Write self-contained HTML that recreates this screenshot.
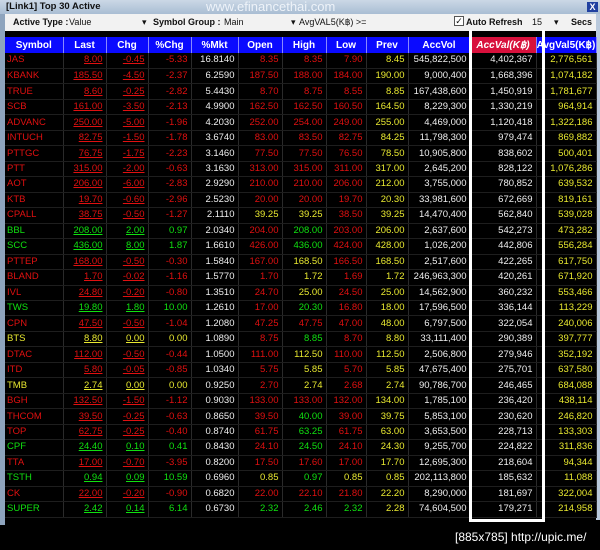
<!DOCTYPE html>
<html><head><meta charset="utf-8">
<style>
*{margin:0;padding:0;box-sizing:border-box}
body{width:600px;height:550px;background:#000;position:relative;overflow:hidden;font-family:"Liberation Sans",sans-serif}
.frameL{position:absolute;left:0;top:0;width:5px;height:525px;background:#8ea4bd}
.frameR{position:absolute;left:596px;top:0;width:4px;height:520px;background:#b9c9dc}
.title{position:absolute;left:0;top:0;width:600px;height:14px;background:linear-gradient(#cbd8e6,#a9bdd3);font-size:9.5px;font-weight:bold;color:#111;padding:1px 0 0 6px;white-space:nowrap}
.wm{position:absolute;left:206px;top:-1px;font-size:13px;color:#eef3f9;font-weight:normal}
.x{position:absolute;left:587px;top:2px;width:11px;height:10px;background:#2040a0;color:#fff;font-size:9px;text-align:center;line-height:10px}
.tb{position:absolute;left:5px;top:14px;width:591px;height:17px;background:#f2f2f2;font-size:9px;color:#111}
.tb span{position:absolute;top:3px;white-space:nowrap}
.blk{position:absolute;left:5px;top:31px;width:591px;height:6px;background:#000}
table{position:absolute;left:5px;top:37px;border-collapse:collapse;table-layout:fixed;font-size:9.5px}
th{background:#0a0aff;color:#fff;height:16px;font-weight:bold;border-right:1px solid #8888ff;font-size:10px;white-space:nowrap;overflow:hidden}
th.av{background:#d8103c;font-style:italic}
td{height:15.48px;border-right:1px solid #2a2a2a;border-bottom:1px solid #1e1e1e;text-align:right;padding-right:3px;white-space:nowrap;line-height:14px;overflow:hidden}
td:first-child{text-align:left;padding-left:2px}
.r{color:#e01010}.g{color:#10e010}.y{color:#e8e830}.w{color:#eee}
u{text-decoration:underline}
.box{position:absolute;left:469px;top:30px;width:76px;height:492px;border:3px solid #fff;border-top:none}
.cap{position:absolute;left:455px;top:530px;color:#fff;font-size:12px;font-family:"Liberation Sans",sans-serif;white-space:nowrap}
</style></head><body>
<div class="frameL"></div><div class="frameR"></div>
<div class="title">[Link1] Top 30 Active<span class="wm">www.efinancethai.com</span><div class="x">X</div></div>
<div class="tb">
<span style="left:8px;font-weight:bold">Active Type :</span><span style="left:64px">Value</span><span style="left:137px">▾</span>
<span style="left:148px;font-weight:bold">Symbol Group :</span><span style="left:219px">Main</span><span style="left:286px">▾</span>
<span style="left:294px">AvgVAL5(K฿) &gt;=</span>
<span style="left:449px;top:2px;width:10px;height:10px;border:1px solid #555;background:#fff;font-size:9px;line-height:8px;text-align:center">✓</span>
<span style="left:461px;font-weight:bold">Auto Refresh</span>
<span style="left:527px">15</span><span style="left:549px">▾</span><span style="left:566px;font-weight:bold">Secs</span>
</div>
<div class="blk"></div>
<table>
<colgroup><col style="width:58px"><col style="width:43px"><col style="width:42px"><col style="width:43px"><col style="width:47px"><col style="width:44px"><col style="width:44px"><col style="width:40px"><col style="width:42px"><col style="width:62px"><col style="width:66px"><col style="width:60px"></colgroup>
<tr><th>Symbol</th><th>Last</th><th>Chg</th><th>%Chg</th><th>%Mkt</th><th>Open</th><th>High</th><th>Low</th><th>Prev</th><th>AccVol</th><th class="av">AccVal(K฿)</th><th>AvgVal5(K฿)</th></tr>
<tr><td class="r">JAS</td><td class="r"><u>8.00</u></td><td class="r"><u>-0.45</u></td><td class="r">-5.33</td><td class="w">16.8140</td><td class="r">8.35</td><td class="r">8.35</td><td class="r">7.90</td><td class="y">8.45</td><td class="w">545,822,500</td><td class="w">4,402,367</td><td class="y">2,776,561</td></tr>
<tr><td class="r">KBANK</td><td class="r"><u>185.50</u></td><td class="r"><u>-4.50</u></td><td class="r">-2.37</td><td class="w">6.2590</td><td class="r">187.50</td><td class="r">188.00</td><td class="r">184.00</td><td class="y">190.00</td><td class="w">9,000,400</td><td class="w">1,668,396</td><td class="y">1,074,182</td></tr>
<tr><td class="r">TRUE</td><td class="r"><u>8.60</u></td><td class="r"><u>-0.25</u></td><td class="r">-2.82</td><td class="w">5.4430</td><td class="r">8.70</td><td class="r">8.75</td><td class="r">8.55</td><td class="y">8.85</td><td class="w">167,438,600</td><td class="w">1,450,919</td><td class="y">1,781,677</td></tr>
<tr><td class="r">SCB</td><td class="r"><u>161.00</u></td><td class="r"><u>-3.50</u></td><td class="r">-2.13</td><td class="w">4.9900</td><td class="r">162.50</td><td class="r">162.50</td><td class="r">160.50</td><td class="y">164.50</td><td class="w">8,229,300</td><td class="w">1,330,219</td><td class="y">964,914</td></tr>
<tr><td class="r">ADVANC</td><td class="r"><u>250.00</u></td><td class="r"><u>-5.00</u></td><td class="r">-1.96</td><td class="w">4.2030</td><td class="r">252.00</td><td class="r">254.00</td><td class="r">249.00</td><td class="y">255.00</td><td class="w">4,469,000</td><td class="w">1,120,418</td><td class="y">1,322,186</td></tr>
<tr><td class="r">INTUCH</td><td class="r"><u>82.75</u></td><td class="r"><u>-1.50</u></td><td class="r">-1.78</td><td class="w">3.6740</td><td class="r">83.00</td><td class="r">83.50</td><td class="r">82.75</td><td class="y">84.25</td><td class="w">11,798,300</td><td class="w">979,474</td><td class="y">869,882</td></tr>
<tr><td class="r">PTTGC</td><td class="r"><u>76.75</u></td><td class="r"><u>-1.75</u></td><td class="r">-2.23</td><td class="w">3.1460</td><td class="r">77.50</td><td class="r">77.50</td><td class="r">76.50</td><td class="y">78.50</td><td class="w">10,905,800</td><td class="w">838,602</td><td class="y">500,401</td></tr>
<tr><td class="r">PTT</td><td class="r"><u>315.00</u></td><td class="r"><u>-2.00</u></td><td class="r">-0.63</td><td class="w">3.1630</td><td class="r">313.00</td><td class="r">315.00</td><td class="r">311.00</td><td class="y">317.00</td><td class="w">2,645,200</td><td class="w">828,122</td><td class="y">1,076,286</td></tr>
<tr><td class="r">AOT</td><td class="r"><u>206.00</u></td><td class="r"><u>-6.00</u></td><td class="r">-2.83</td><td class="w">2.9290</td><td class="r">210.00</td><td class="r">210.00</td><td class="r">206.00</td><td class="y">212.00</td><td class="w">3,755,000</td><td class="w">780,852</td><td class="y">639,532</td></tr>
<tr><td class="r">KTB</td><td class="r"><u>19.70</u></td><td class="r"><u>-0.60</u></td><td class="r">-2.96</td><td class="w">2.5230</td><td class="r">20.00</td><td class="r">20.00</td><td class="r">19.70</td><td class="y">20.30</td><td class="w">33,981,600</td><td class="w">672,669</td><td class="y">819,161</td></tr>
<tr><td class="r">CPALL</td><td class="r"><u>38.75</u></td><td class="r"><u>-0.50</u></td><td class="r">-1.27</td><td class="w">2.1110</td><td class="y">39.25</td><td class="y">39.25</td><td class="r">38.50</td><td class="y">39.25</td><td class="w">14,470,400</td><td class="w">562,840</td><td class="y">539,028</td></tr>
<tr><td class="g">BBL</td><td class="g"><u>208.00</u></td><td class="g"><u>2.00</u></td><td class="g">0.97</td><td class="w">2.0340</td><td class="r">204.00</td><td class="g">208.00</td><td class="r">203.00</td><td class="y">206.00</td><td class="w">2,637,600</td><td class="w">542,273</td><td class="y">473,282</td></tr>
<tr><td class="g">SCC</td><td class="g"><u>436.00</u></td><td class="g"><u>8.00</u></td><td class="g">1.87</td><td class="w">1.6610</td><td class="r">426.00</td><td class="g">436.00</td><td class="r">424.00</td><td class="y">428.00</td><td class="w">1,026,200</td><td class="w">442,806</td><td class="y">556,284</td></tr>
<tr><td class="r">PTTEP</td><td class="r"><u>168.00</u></td><td class="r"><u>-0.50</u></td><td class="r">-0.30</td><td class="w">1.5840</td><td class="r">167.00</td><td class="y">168.50</td><td class="r">166.50</td><td class="y">168.50</td><td class="w">2,517,600</td><td class="w">422,265</td><td class="y">617,750</td></tr>
<tr><td class="r">BLAND</td><td class="r"><u>1.70</u></td><td class="r"><u>-0.02</u></td><td class="r">-1.16</td><td class="w">1.5770</td><td class="r">1.70</td><td class="y">1.72</td><td class="r">1.69</td><td class="y">1.72</td><td class="w">246,963,300</td><td class="w">420,261</td><td class="y">671,920</td></tr>
<tr><td class="r">IVL</td><td class="r"><u>24.80</u></td><td class="r"><u>-0.20</u></td><td class="r">-0.80</td><td class="w">1.3510</td><td class="r">24.70</td><td class="y">25.00</td><td class="r">24.50</td><td class="y">25.00</td><td class="w">14,562,900</td><td class="w">360,232</td><td class="y">553,466</td></tr>
<tr><td class="g">TWS</td><td class="g"><u>19.80</u></td><td class="g"><u>1.80</u></td><td class="g">10.00</td><td class="w">1.2610</td><td class="r">17.00</td><td class="g">20.30</td><td class="r">16.80</td><td class="y">18.00</td><td class="w">17,596,500</td><td class="w">336,144</td><td class="y">113,229</td></tr>
<tr><td class="r">CPN</td><td class="r"><u>47.50</u></td><td class="r"><u>-0.50</u></td><td class="r">-1.04</td><td class="w">1.2080</td><td class="r">47.25</td><td class="r">47.75</td><td class="r">47.00</td><td class="y">48.00</td><td class="w">6,797,500</td><td class="w">322,054</td><td class="y">240,006</td></tr>
<tr><td class="y">BTS</td><td class="y"><u>8.80</u></td><td class="y"><u>0.00</u></td><td class="y">0.00</td><td class="w">1.0890</td><td class="r">8.75</td><td class="g">8.85</td><td class="r">8.70</td><td class="y">8.80</td><td class="w">33,111,400</td><td class="w">290,389</td><td class="y">397,777</td></tr>
<tr><td class="r">DTAC</td><td class="r"><u>112.00</u></td><td class="r"><u>-0.50</u></td><td class="r">-0.44</td><td class="w">1.0500</td><td class="r">111.00</td><td class="y">112.50</td><td class="r">110.00</td><td class="y">112.50</td><td class="w">2,506,800</td><td class="w">279,946</td><td class="y">352,192</td></tr>
<tr><td class="r">ITD</td><td class="r"><u>5.80</u></td><td class="r"><u>-0.05</u></td><td class="r">-0.85</td><td class="w">1.0340</td><td class="r">5.75</td><td class="y">5.85</td><td class="r">5.70</td><td class="y">5.85</td><td class="w">47,675,400</td><td class="w">275,701</td><td class="y">637,580</td></tr>
<tr><td class="y">TMB</td><td class="y"><u>2.74</u></td><td class="y"><u>0.00</u></td><td class="y">0.00</td><td class="w">0.9250</td><td class="r">2.70</td><td class="y">2.74</td><td class="r">2.68</td><td class="y">2.74</td><td class="w">90,786,700</td><td class="w">246,465</td><td class="y">684,088</td></tr>
<tr><td class="r">BGH</td><td class="r"><u>132.50</u></td><td class="r"><u>-1.50</u></td><td class="r">-1.12</td><td class="w">0.9030</td><td class="r">133.00</td><td class="r">133.00</td><td class="r">132.00</td><td class="y">134.00</td><td class="w">1,785,100</td><td class="w">236,420</td><td class="y">438,114</td></tr>
<tr><td class="r">THCOM</td><td class="r"><u>39.50</u></td><td class="r"><u>-0.25</u></td><td class="r">-0.63</td><td class="w">0.8650</td><td class="r">39.50</td><td class="g">40.00</td><td class="r">39.00</td><td class="y">39.75</td><td class="w">5,853,100</td><td class="w">230,620</td><td class="y">246,820</td></tr>
<tr><td class="r">TOP</td><td class="r"><u>62.75</u></td><td class="r"><u>-0.25</u></td><td class="r">-0.40</td><td class="w">0.8740</td><td class="r">61.75</td><td class="g">63.25</td><td class="r">61.75</td><td class="y">63.00</td><td class="w">3,653,500</td><td class="w">228,713</td><td class="y">133,303</td></tr>
<tr><td class="g">CPF</td><td class="g"><u>24.40</u></td><td class="g"><u>0.10</u></td><td class="g">0.41</td><td class="w">0.8430</td><td class="r">24.10</td><td class="g">24.50</td><td class="r">24.10</td><td class="y">24.30</td><td class="w">9,255,700</td><td class="w">224,822</td><td class="y">311,836</td></tr>
<tr><td class="r">TTA</td><td class="r"><u>17.00</u></td><td class="r"><u>-0.70</u></td><td class="r">-3.95</td><td class="w">0.8200</td><td class="r">17.50</td><td class="r">17.60</td><td class="r">17.00</td><td class="y">17.70</td><td class="w">12,695,300</td><td class="w">218,604</td><td class="y">94,344</td></tr>
<tr><td class="g">TSTH</td><td class="g"><u>0.94</u></td><td class="g"><u>0.09</u></td><td class="g">10.59</td><td class="w">0.6960</td><td class="y">0.85</td><td class="g">0.97</td><td class="y">0.85</td><td class="y">0.85</td><td class="w">202,113,800</td><td class="w">185,632</td><td class="y">11,088</td></tr>
<tr><td class="r">CK</td><td class="r"><u>22.00</u></td><td class="r"><u>-0.20</u></td><td class="r">-0.90</td><td class="w">0.6820</td><td class="r">22.00</td><td class="r">22.10</td><td class="r">21.80</td><td class="y">22.20</td><td class="w">8,290,000</td><td class="w">181,697</td><td class="y">322,004</td></tr>
<tr><td class="g">SUPER</td><td class="g"><u>2.42</u></td><td class="g"><u>0.14</u></td><td class="g">6.14</td><td class="w">0.6730</td><td class="g">2.32</td><td class="g">2.46</td><td class="g">2.32</td><td class="y">2.28</td><td class="w">74,604,500</td><td class="w">179,271</td><td class="y">214,958</td></tr>
</table>
<div class="box"></div>
<div class="cap">[885x785] http://upic.me/</div>
</body></html>
